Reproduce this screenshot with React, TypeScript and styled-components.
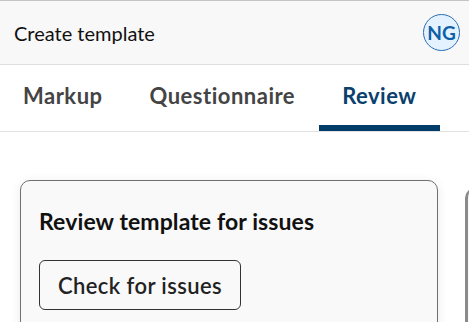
import React from 'react';
import styled, { createGlobalStyle } from 'styled-components';

const GlobalStyle = createGlobalStyle`
  html, body {
    margin: 0;
    padding: 0;
    background: #ffffff;
    overflow: hidden;
  }
  body {
    font-family: Lato, "Noto Sans", "Liberation Sans", sans-serif;
    color: #1a1a1a;
  }
`;

const Page = styled.div`
  width: 469px;
  height: 322px;
  border-top: 1px solid #c4c4c4;
  box-sizing: border-box;
  display: flex;
  flex-direction: column;
  overflow: hidden;
`;

const Header = styled.header`
  height: 63px;
  display: flex;
  align-items: center;
  justify-content: space-between;
  padding: 0 9px 0 14px;
  background: #f8f8f8;
  border-bottom: 1px solid #dedede;
  flex-shrink: 0;
`;

const HeaderTitle = styled.div`
  font-size: 20px;
  color: #111;
`;

const Avatar = styled.div`
  width: 35px;
  height: 35px;
  border-radius: 50%;
  border: 1px solid #2a6fb4;
  background: #e4f1ff;
  color: #0d5fa6;
  font-weight: 700;
  font-size: 19px;
  display: flex;
  align-items: center;
  justify-content: center;
`;

const TabBar = styled.nav`
  display: flex;
  height: 66px;
  border-bottom: 1px solid #e2e2e2;
  flex-shrink: 0;
`;

const Tab = styled.div<{ $active?: boolean }>`
  display: flex;
  align-items: center;
  padding: 0 24px 0 23px;
  font-size: 22px;
  font-weight: 700;
  color: ${(p) => (p.$active ? '#0b3f6e' : '#444444')};
  border-bottom: 6px solid ${(p) => (p.$active ? '#003d6b' : 'transparent')};
  letter-spacing: 0.5px;
`;

const Content = styled.main`
  flex: 1;
  display: flex;
  gap: 27px;
  padding: 48px 0 0 20px;
  background: #ffffff;
`;

const Card = styled.section`
  width: 418px;
  flex-shrink: 0;
  box-sizing: border-box;
  border: 1px solid #707070;
  border-radius: 10px;
  background: #f9f9f9;
  box-shadow: 0 2px 12px rgba(0, 0, 0, 0.08);
  padding: 26px 18px 30px;
`;

const SideCard = styled.section`
  width: 200px;
  flex-shrink: 0;
  margin-top: 8px;
  border-left: 3px solid #8a8a8a;
  border-top: 1px solid #8a8a8a;
  border-radius: 10px 0 0 0;
  background: #f9f9f9;
`;

const CardTitle = styled.h2`
  margin: 0 0 25px;
  font-size: 23px;
  font-weight: 700;
  color: #111;
  letter-spacing: 0.1px;
`;

const Button = styled.button`
  width: 202px;
  height: 50px;
  border: 1px solid #333;
  border-radius: 6px;
  background: #f9f9f9;
  font-family: inherit;
  font-size: 22px;
  font-weight: 600;
  color: #222;
  cursor: pointer;
  letter-spacing: 0.4px;
`;

const App: React.FC = () => {
  return (
    <>
      <GlobalStyle />
      <Page>
        <Header>
          <HeaderTitle>Create template</HeaderTitle>
          <Avatar>NG</Avatar>
        </Header>
        <TabBar>
          <Tab>Markup</Tab>
          <Tab>Questionnaire</Tab>
          <Tab $active>Review</Tab>
        </TabBar>
        <Content>
          <Card>
            <CardTitle>Review template for issues</CardTitle>
            <Button>Check for issues</Button>
          </Card>
          <SideCard />
        </Content>
      </Page>
    </>
  );
};

export default App;
